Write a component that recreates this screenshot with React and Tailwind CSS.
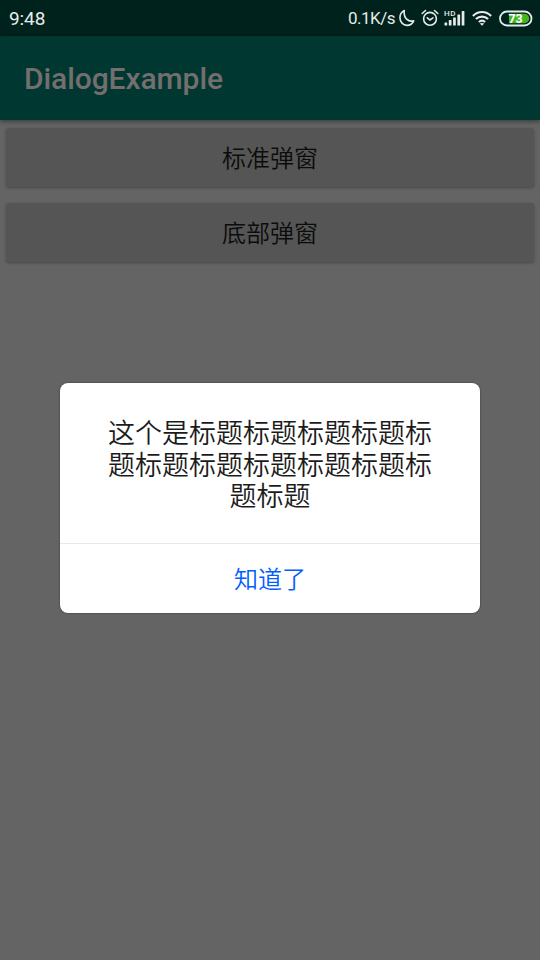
import React, { useState } from 'react';

const StatusBar = () => (
    <div className="flex h-9 items-center justify-between bg-[#00221d] pl-[9px] pr-[7px] text-[#e6ebea]">
        <span className="font-['Roboto',sans-serif] text-[19px] leading-none tracking-[-0.1px]">9:48</span>
        <div className="flex items-center">
            <span className="mr-[4px] font-['Roboto',sans-serif] text-[17px] leading-none tracking-[-0.5px]">0.1K/s</span>

            {/* no molestar */}
            <svg className="mr-[6px] h-[18px] w-[16px]" viewBox="0 0 17 18" preserveAspectRatio="none" fill="none" stroke="currentColor" strokeWidth="1.7" strokeLinejoin="round">
                <path d="M5.6 1.6C2.7 3 1 5.6 1 8.8a7.6 7.6 0 0 0 7.5 7.6c3.2 0 5.9-1.8 7.1-4.6-5.5 1.7-11.1-2.6-10-10.2Z" />
            </svg>

            {/* alarma */}
            <svg className="mr-[5px] h-[18px] w-[18px]" viewBox="0 0 18 18" fill="none" stroke="currentColor" strokeWidth="1.6" strokeLinecap="round">
                <circle cx="9" cy="9.8" r="6.4" />
                <path d="M1.2 4.5 4.5 1.5M13.5 1.5l3.3 3M6.3 8.8 9 11l2.9-2.2" />
            </svg>

            {/* red movil */}
            <svg className="mr-[7px] h-[18px] w-[21px]" viewBox="0 0 21 18" fill="currentColor">
                <text x="0" y="6.6" fontFamily="Roboto" fontSize="8" fontWeight="500" textLength="11.5">HD</text>
                <rect x="0.5" y="13.5" width="2.7" height="3" rx="0.5" />
                <rect x="4.8" y="11" width="2.7" height="5.5" rx="0.5" />
                <rect x="9.1" y="8.5" width="2.7" height="8" rx="0.5" />
                <rect x="13.4" y="5.5" width="2.7" height="11" rx="0.5" />
                <rect x="17.7" y="2" width="2.7" height="14.5" rx="0.5" />
            </svg>

            {/* wifi */}
            <svg className="mr-[7px] h-[16px] w-[20px]" viewBox="0 0 20 16" fill="none" stroke="currentColor" strokeWidth="2.2">
                <path d="M.9 5.9C6 .7 14 .7 19.1 5.9M3.9 9c3.4-3.3 8.8-3.3 12.2 0" />
                <path d="M6.9 12c1.8-1.6 4.4-1.6 6.2 0" />
                <path d="M7.8 13.6q2.2-1.2 4.4 0L10 15.8Z" fill="currentColor" stroke="none" />
            </svg>

            {/* bateria */}
            <svg className="h-[17px] w-[34px]" viewBox="0 0 34 17">
                <rect x="1" y="1.5" width="31.5" height="14" rx="7" fill="none" stroke="currentColor" strokeWidth="1.8" />
                <path d="M10 3.8h15.5a4.7 4.7 0 0 1 0 9.4H10Z" fill="#43b51f" />
                <text x="16.6" y="13" textAnchor="middle" fill="#fff" fontFamily="Roboto" fontSize="12.5" fontWeight="700">73</text>
            </svg>
        </div>
    </div>
);

const AndroidButton = ({ children, onClick }) => (
    <button
        onClick={onClick}
        className="h-[59px] w-full rounded-[3px] bg-[#555555] pb-[2px] text-[24px] leading-none font-[350] text-[#0c0c0c] shadow-[0_1px_3px_rgba(0,0,0,0.3)]"
    >
        {children}
    </button>
);

const Dialog = ({ title, onClose }) => (
    <div className="absolute inset-0 flex items-center justify-center pt-9">
        <div className="flex h-[230px] w-[420px] flex-col overflow-hidden rounded-[8px] bg-white shadow-[0_0_2px_rgba(0,0,0,0.5)]">
            <div className="h-[160px] px-12 pt-[33px] text-center text-[27px] leading-[31.5px] font-[350] text-[#1c1c1c]">
                {title}
            </div>
            <button onClick={onClose} className="flex-1 border-t border-[#e8e8e8] pb-[2px] text-[24px] leading-none font-[350] text-[#005dff]">
                知道了
            </button>
        </div>
    </div>
);

const App = () => {
    const [open, setOpen] = useState(true);

    return (
        <div className="relative h-[960px] w-[540px] overflow-hidden bg-[#646464] font-['Noto_Sans_CJK_SC',sans-serif]">
            <StatusBar />
            <div className="flex h-[84px] items-center bg-[#003731] pl-6 shadow-[0_1px_5px_rgba(0,0,0,0.5)]">
                <h1 className="mt-[2px] font-['Roboto',sans-serif] text-[30px] leading-none font-medium tracking-[-0.08px] text-[#746e6e]">DialogExample</h1>
            </div>

            <div className="flex flex-col gap-4 px-[6px] pt-2">
                <AndroidButton onClick={() => setOpen(true)}>标准弹窗</AndroidButton>
                <AndroidButton>底部弹窗</AndroidButton>
            </div>

            {open && (
                <Dialog
                    title="这个是标题标题标题标题标题标题标题标题标题标题标题标题"
                    onClose={() => setOpen(false)}
                />
            )}
        </div>
    );
};

export default App;
